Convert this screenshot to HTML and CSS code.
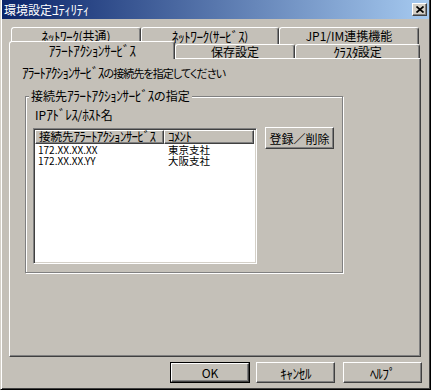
FILE: index.html
```html
<!DOCTYPE html>
<html lang="ja">
<head>
<meta charset="utf-8">
<title>環境設定ﾕﾃｨﾘﾃｨ</title>
<link rel="stylesheet" href="styles.css">
</head>
<body>
<div class="window">
  <div class="titlebar">
    <span class="title">環境設定<span class="hk">ﾕﾃｨﾘﾃｨ</span></span>
    <span class="close"><svg width="8" height="7" viewBox="0 0 8 7"><path d="M0.5 0.5 L7.5 6.5 M7.5 0.5 L0.5 6.5" stroke="#000" stroke-width="1.7" fill="none"/></svg></span>
  </div>
  <div class="tabs">
    <div class="tabrow back">
      <div class="tab w1"><span class="hk">ﾈｯﾄﾜｰｸ</span>(共通)</div>
      <div class="tab w2"><span class="hk">ﾈｯﾄﾜｰｸ</span>(<span class="hk">ｻｰﾋﾞｽ</span>)</div>
      <div class="tab w3">JP1/IM連携機能</div>
    </div>
    <div class="tabrow front">
      <div class="tab sel w4"><span class="hk">ｱﾗｰﾄｱｸｼｮﾝｻｰﾋﾞｽ</span></div>
      <div class="tab w5">保存設定</div>
      <div class="tab w6"><span class="hk">ｸﾗｽﾀ</span>設定</div>
    </div>
  </div>
  <div class="panel">
    <p class="hint"><span class="hk">ｱﾗｰﾄｱｸｼｮﾝｻｰﾋﾞｽ</span>の接続先を指定してください</p>
    <div class="group">
      <span class="legend">接続先<span class="hk">ｱﾗｰﾄｱｸｼｮﾝｻｰﾋﾞｽ</span>の指定</span>
      <div class="iplabel">IP<span class="hk">ｱﾄﾞﾚｽ</span>/<span class="hk">ﾎｽﾄ</span>名</div>
      <div class="listrow">
        <div class="listview">
          <div class="lvhead">
            <div class="hcell c1">接続先<span class="hk">ｱﾗｰﾄｱｸｼｮﾝｻｰﾋﾞｽ</span></div>
            <div class="hcell c2"><span class="hk">ｺﾒﾝﾄ</span></div>
          </div>
          <div class="lvrow"><span class="d1">172.XX.XX.XX</span><span class="d2">東京支社</span></div>
          <div class="lvrow"><span class="d1">172.XX.XX.YY</span><span class="d2">大阪支社</span></div>
        </div>
        <div class="btn regbtn">登録／削除</div>
      </div>
    </div>
  </div>
  <div class="buttons">
    <div class="default"><div class="btn okbtn">OK</div></div>
    <div class="btn cancelbtn"><span class="hk">ｷｬﾝｾﾙ</span></div>
    <div class="btn helpbtn"><span class="hk">ﾍﾙﾌﾟ</span></div>
  </div>
</div>
</body>
</html>
```
FILE: styles.css
```css
html, body {
  margin: 0;
  padding: 0;
  background: #c4c0b8;
}
body {
  font-family: "Noto Sans CJK JP", "DejaVu Sans", sans-serif;
  font-size: 12px;
  color: #000;
}
.hk {
  font-size: 13.5px;
  letter-spacing: -0.6px;
  line-height: 10px;
}
.window {
  width: 431px;
  height: 390px;
  box-sizing: border-box;
  background: #c4c0b8;
  border-left: 1px solid #d4d0c8;
  border-right: 1px solid #000;
  border-bottom: 1px solid #000;
  box-shadow: inset 1px 0 #fff, inset -1px -1px #404040;
  padding: 0 1px 1px 1px;
  display: flex;
  flex-direction: column;
}
.titlebar {
  height: 19px;
  flex: none;
  display: flex;
  align-items: center;
  justify-content: space-between;
  padding: 0 2px 0 2px;
  background: linear-gradient(to right, #0a246a, #a6caf0);
}
.title {
  color: #fff;
  font-size: 12px;
  line-height: 14px;
  white-space: nowrap;
}
.close {
  width: 15px;
  height: 13px;
  box-sizing: border-box;
  background: #d4d0c8;
  border: 1px solid;
  border-color: #fff #404040 #404040 #fff;
  box-shadow: inset -1px -1px #808080;
  display: flex;
  align-items: center;
  justify-content: center;
}
.close svg { display: block; }
.tabs {
  margin-top: 8px;
  margin-bottom: -1px;
  flex: none;
}
.tabrow {
  display: flex;
}
.tabrow.back {
  padding-left: 9px;
  height: 17px;
}
.tabrow.front {
  padding-left: 7px;
  height: 18px;
  margin-top: -3px;
  align-items: flex-end;
}
.tab {
  box-sizing: border-box;
  border: 1px solid;
  border-bottom: none;
  border-color: #fff #404040 transparent #fff;
  box-shadow: inset -1px 0 #808080;
  border-radius: 3px 3px 0 0;
  background: #c4c0b8;
  display: flex;
  align-items: center;
  justify-content: center;
  white-space: nowrap;
  line-height: 12px;
}
.tabrow.back .tab { height: 17px; padding-bottom: 1px; }
.tabrow.front .tab { height: 14px; margin-bottom: 1px; }
.tabrow.front .tab.sel {
  height: 18px;
  margin-bottom: 0;
  position: relative;
  z-index: 2;
  padding-bottom: 2px;
}
.w1 { width: 130px; }
.w2 { width: 138px; }
.w3 { width: 140px; }
.w4 { width: 166px; }
.w5 { width: 120px; }
.w6 { width: 125px; }
.panel {
  flex: none;
  margin-left: 7px;
  width: 412px;
  height: 299px;
  box-sizing: border-box;
  border: 1px solid;
  border-color: #fff #404040 #404040 #fff;
  box-shadow: inset -1px -1px #808080;
  display: flex;
  flex-direction: column;
}
.hint {
  margin: 8px 0 0 12px;
  font-size: 11px;
  line-height: 13px;
  white-space: nowrap;
  font-feature-settings: "palt";
  letter-spacing: -0.9px;
}
.hint .hk { font-feature-settings: normal; letter-spacing: -1px; }
.group {
  position: relative;
  margin: 16px 0 0 15px;
  width: 318px;
  height: 177px;
  box-sizing: border-box;
  border: 1px solid #808080;
  box-shadow: inset 1px 1px #fff, 1px 1px #fff;
  padding: 1px 0 0 7px;
}
.legend {
  position: absolute;
  left: 3px;
  top: -8px;
  padding: 0 2px;
  background: #c4c0b8;
  line-height: 14px;
  white-space: nowrap;
}
.iplabel {
  margin: 10px 0 0 2px;
  line-height: 13px;
}
.listrow {
  display: flex;
  align-items: flex-start;
  margin-top: 7px;
}
.listview {
  width: 224px;
  height: 136px;
  box-sizing: border-box;
  background: #fff;
  border: 1px solid;
  border-color: #808080 #fff #fff #808080;
  box-shadow: inset 1px 1px #404040, inset -1px -1px #d4d0c8;
  padding: 1px;
}
.lvhead {
  display: flex;
  height: 14px;
  margin-right: 1px;
}
.hcell {
  box-sizing: border-box;
  height: 14px;
  background: #c4c0b8;
  border: 1px solid;
  border-color: #fff #404040 #404040 #fff;
  box-shadow: inset -1px -1px #808080;
  font-size: 11.5px;
  line-height: 11px;
  padding-left: 3px;
  white-space: nowrap;
}
.hcell .hk { font-size: 13px; letter-spacing: -0.7px; }
.hcell.c1 { width: 129px; }
.hcell.c2 { flex: 1; }
.lvrow {
  display: flex;
  height: 11px;
  font-size: 10px;
  line-height: 11px;
  white-space: nowrap;
}
.d1 { width: 129px; padding-left: 3px; box-sizing: border-box; }
.d2 { padding-left: 4px; font-size: 10.5px; }
.btn {
  box-sizing: border-box;
  background: #c4c0b8;
  border: 1px solid;
  border-color: #fff #404040 #404040 #fff;
  box-shadow: inset -1px -1px #808080;
  display: flex;
  align-items: center;
  justify-content: center;
  white-space: nowrap;
  line-height: 13px;
}
.regbtn {
  margin: -1px 0 0 8px;
  width: 69px;
  height: 22px;
}
.buttons {
  flex: none;
  display: flex;
  margin-top: 5px;
  padding-left: 168px;
}
.default {
  width: 80px;
  height: 21px;
  box-sizing: border-box;
  border: 1px solid #000;
}
.okbtn {
  width: 78px;
  height: 19px;
}
.cancelbtn {
  margin-left: 6px;
  width: 79px;
  height: 21px;
}
.helpbtn {
  margin-left: 8px;
  width: 79px;
  height: 21px;
}
```
